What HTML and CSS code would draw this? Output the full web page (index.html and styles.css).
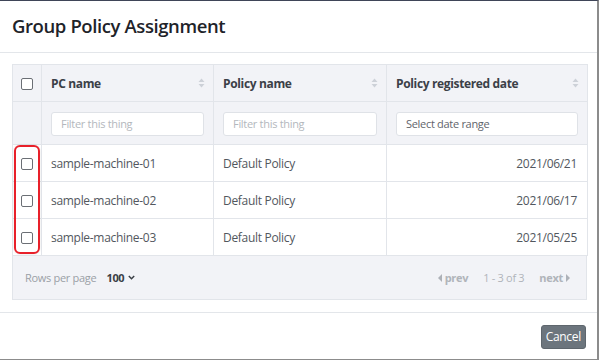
FILE: index.html
```html
<!DOCTYPE html>
<html>
<head>
<meta charset="utf-8">
<link rel="stylesheet" href="styles.css">
</head>
<body>
<div class="modal">
  <div class="modal-header">
    <h1 class="title">Group Policy Assignment</h1>
  </div>
  <div class="modal-body">
    <div class="grid-wrap">
      <table class="grid">
        <colgroup>
          <col class="c-check"><col class="c-pc"><col class="c-pol"><col class="c-date">
        </colgroup>
        <thead>
          <tr class="head-row">
            <th class="check-cell"><span class="cb"></span></th>
            <th><div class="th-in"><span>PC name</span><span class="sort"><svg width="7" height="10" viewBox="0 0 7 10"><path d="M3.5 0.5 L6.5 4 H0.5Z M3.5 9.5 L6.5 6 H0.5Z" fill="#cdd1d8"/></svg></span></div></th>
            <th><div class="th-in"><span>Policy name</span><span class="sort"><svg width="7" height="10" viewBox="0 0 7 10"><path d="M3.5 0.5 L6.5 4 H0.5Z M3.5 9.5 L6.5 6 H0.5Z" fill="#cdd1d8"/></svg></span></div></th>
            <th><div class="th-in"><span>Policy registered date</span><span class="sort"><svg width="7" height="10" viewBox="0 0 7 10"><path d="M3.5 0.5 L6.5 4 H0.5Z M3.5 9.5 L6.5 6 H0.5Z" fill="#cdd1d8"/></svg></span></div></th>
          </tr>
          <tr class="filter-row">
            <th></th>
            <th><div class="filter">Filter this thing</div></th>
            <th><div class="filter">Filter this thing</div></th>
            <th><div class="filter date">Select date range</div></th>
          </tr>
        </thead>
        <tbody>
          <tr><td class="check-cell"><span class="cb"></span></td><td>sample-machine-01</td><td>Default Policy</td><td class="num">2021/06/21</td></tr>
          <tr><td class="check-cell"><span class="cb"></span></td><td>sample-machine-02</td><td>Default Policy</td><td class="num">2021/06/17</td></tr>
          <tr><td class="check-cell"><span class="cb"></span></td><td>sample-machine-03</td><td>Default Policy</td><td class="num">2021/05/25</td></tr>
        </tbody>
      </table>
      <div class="grid-footer">
        <div class="rpp"><span class="rpp-label">Rows per page</span><span class="rpp-val">100 <svg width="7" height="5" viewBox="0 0 7 5"><path d="M0.8 1 L3.5 3.7 L6.2 1" fill="none" stroke="#3a3f46" stroke-width="1.5"/></svg></span></div>
        <div class="pager">
          <span class="pg-btn"><svg width="4" height="8" viewBox="0 0 4 8"><path d="M4 0 V8 L0 4Z" fill="#adb1b8"/></svg> prev</span>
          <span class="pg-info">1 - 3 of 3</span>
          <span class="pg-btn">next <svg width="4" height="8" viewBox="0 0 4 8"><path d="M0 0 V8 L4 4Z" fill="#adb1b8"/></svg></span>
        </div>
      </div>
      <div class="highlight"></div>
    </div>
  </div>
  <div class="modal-footer">
    <button class="btn">Cancel</button>
  </div>
</div>
</body>
</html>
```

FILE: styles.css
```css
html, body {
  margin: 0;
  padding: 0;
  background: #fff;
}
body {
  font-family: "Open Sans", "Noto Sans", "Liberation Sans", sans-serif;
  color: #212529;
}
.modal {
  width: 597px;
  height: 358px;
  border-top: 1px solid #3f4558;
  border-right: 2px solid #8c8c8c;
  border-bottom: 1px solid #8c8c8c;
  display: flex;
  flex-direction: column;
  background: #fff;
}
.modal-header {
  height: 51px;
  border-bottom: 1px solid #e3e6ea;
  display: flex;
  align-items: center;
  padding: 0 12px;
}
.title {
  margin: 0;
  font-size: 18.5px;
  font-weight: 600;
  color: #1e2329;
  letter-spacing: -0.4px;
  padding-bottom: 3px;
}
.modal-body {
  padding: 11px 10px 12px 12px;
  border-bottom: 1px solid #e3e6ea;
}
.grid-wrap {
  position: relative;
  width: 575px;
}
.grid {
  width: 575px;
  border-collapse: collapse;
  table-layout: fixed;
  font-size: 12px;
  letter-spacing: -0.3px;
}
.c-check { width: 29px; }
.c-pc { width: 172px; }
.c-pol { width: 173px; }
.c-date { width: 201px; }
.grid th, .grid td {
  border: 1px solid #e2e5ea;
  padding: 0 9px;
  text-align: left;
}
.grid thead th {
  background: #f2f3f7;
}
.head-row th {
  height: 36px;
  font-weight: 700;
  color: #3b4047;
  font-size: 12px;
  letter-spacing: -0.35px;
}
.th-in {
  display: flex;
  justify-content: space-between;
  align-items: center;
}
.sort {
  display: flex;
  align-items: center;
  margin-right: -1px;
}
.check-cell {
  text-align: center !important;
  padding: 0 !important;
}
.cb {
  display: inline-block;
  width: 10px;
  height: 10px;
  border: 1px solid #6b6f75;
  border-radius: 2px;
  background: #fff;
  vertical-align: middle;
}
.filter-row th {
  height: 42px;
  font-weight: 400;
}
.filter {
  height: 22px;
  border: 1px solid #dfe2e7;
  border-radius: 3px;
  background: #fff;
  color: #b3b7bd;
  font-size: 11px;
  letter-spacing: -0.3px;
  display: flex;
  align-items: center;
  padding: 0 9px;
  margin-top: 1px;
}
.filter.date {
  color: #5f646b;
}
.grid tbody td {
  height: 36px;
  color: #52575e;
  background: #fff;
}
.grid tbody td.num {
  text-align: right;
  padding-right: 10px;
}
.grid-footer {
  height: 43px;
  background: #f2f3f7;
  border: 1px solid #e2e5ea;
  border-top: none;
  display: flex;
  align-items: center;
  justify-content: space-between;
  padding: 0 16px 0 12px;
  font-size: 11px;
  letter-spacing: -0.3px;
}
.rpp {
  display: flex;
  align-items: center;
  gap: 10px;
}
.rpp-label {
  color: #9aa0a6;
}
.rpp-val {
  font-weight: 700;
  color: #3a3f46;
  display: flex;
  align-items: center;
  gap: 4px;
}
.pager {
  display: flex;
  align-items: center;
  gap: 15px;
  color: #b0b4ba;
}
.pg-btn {
  font-weight: 700;
  display: flex;
  align-items: center;
  gap: 3px;
}
.pg-info {
  color: #b0b4ba;
}
.highlight {
  position: absolute;
  left: 2px;
  top: 81px;
  width: 22px;
  height: 105px;
  border: 2px solid #e8202a;
  border-radius: 6px;
  box-shadow: 0 0 2px rgba(0,0,0,0.15);
  pointer-events: none;
}
.modal-footer {
  flex: 1;
  display: flex;
  align-items: center;
  justify-content: flex-end;
  padding: 0 11px 0 12px;
}
.btn {
  font-family: inherit;
  font-size: 12px;
  letter-spacing: -0.3px;
  color: #fff;
  background: #6c757d;
  border: 1px solid #5e666d;
  border-radius: 3px;
  height: 24px;
  padding: 0 4px;
  margin-top: 1px;
}
```
